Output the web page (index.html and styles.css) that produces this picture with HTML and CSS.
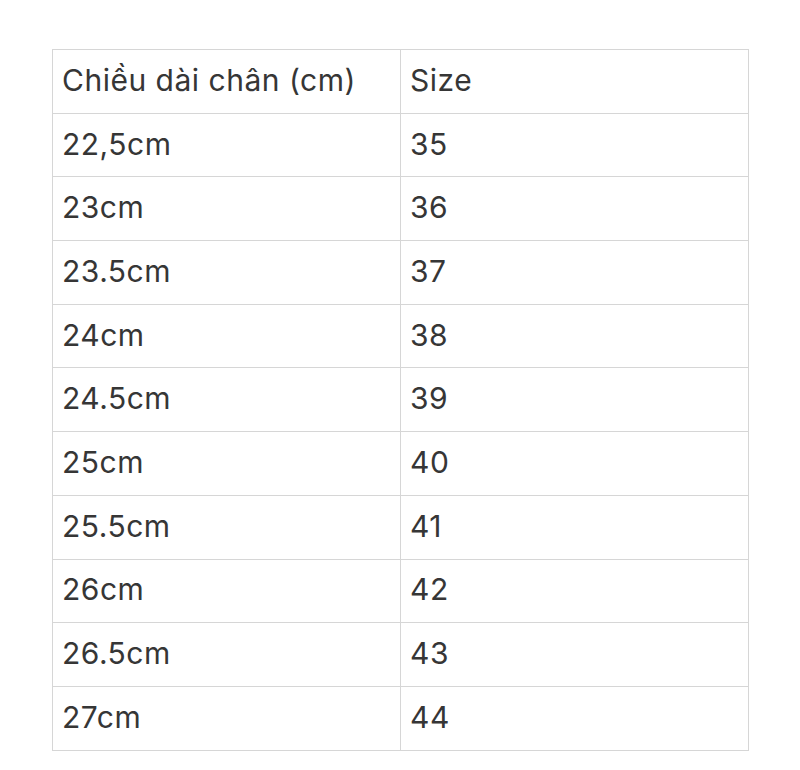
FILE: index.html
```html
<!DOCTYPE html>
<html lang="vi">
<head>
<meta charset="utf-8">
<title>Bảng size</title>
<link rel="stylesheet" href="styles.css">
</head>
<body>
<table class="size-table">
  <tr><td>Chiều dài chân (cm)</td><td>Size</td></tr>
  <tr><td>22,5cm</td><td>35</td></tr>
  <tr><td>23cm</td><td>36</td></tr>
  <tr><td>23.5cm</td><td>37</td></tr>
  <tr><td>24cm</td><td>38</td></tr>
  <tr><td>24.5cm</td><td>39</td></tr>
  <tr><td>25cm</td><td>40</td></tr>
  <tr><td>25.5cm</td><td>41</td></tr>
  <tr><td>26cm</td><td>42</td></tr>
  <tr><td>26.5cm</td><td>43</td></tr>
  <tr><td>27cm</td><td>44</td></tr>
</table>
</body>
</html>
```
FILE: styles.css
```css
html, body {
  margin: 0;
  padding: 0;
  background: #ffffff;
}
body {
  padding: 49px 0 0 52px;
  font-family: Inter, "Noto Sans", sans-serif;
  color: #363636;
}
.size-table {
  border-collapse: collapse;
  width: 697px;
  table-layout: fixed;
}
.size-table td {
  border: 1px solid #d6d6d6;
  height: 63.7px;
  padding: 0 10px 3px 9px;
  box-sizing: border-box;
  font-size: 30px;
  letter-spacing: 0.5px;
  line-height: 1;
  vertical-align: middle;
}
```
